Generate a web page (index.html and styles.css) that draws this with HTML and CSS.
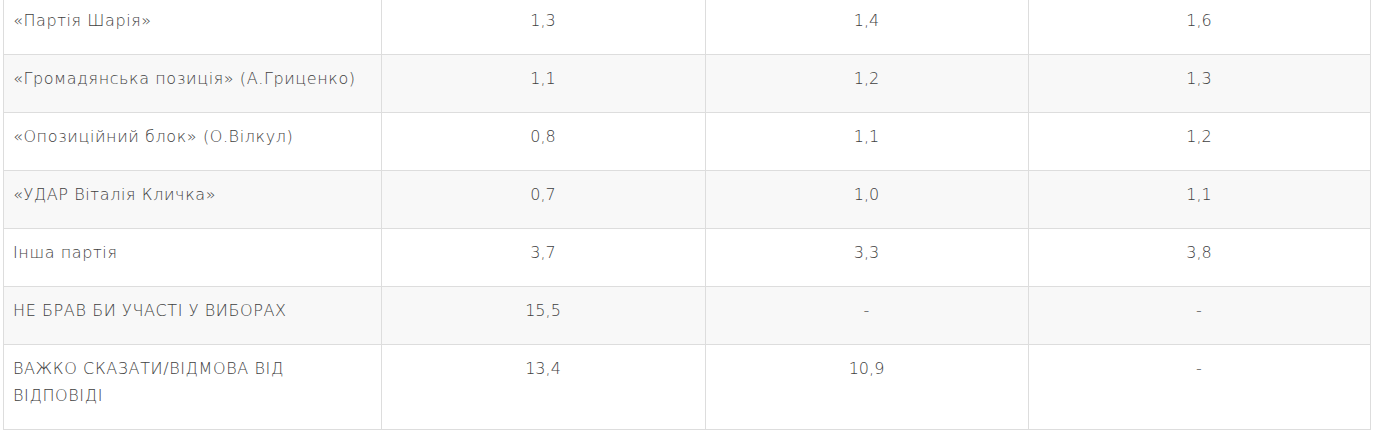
FILE: index.html
```html
<!DOCTYPE html>
<html lang="uk">
<head>
<meta charset="utf-8">
<link rel="stylesheet" href="styles.css">
</head>
<body>
<table class="poll">
  <colgroup>
    <col class="c1"><col class="c2"><col class="c3"><col class="c4">
  </colgroup>
  <tbody>
    <tr><td>«Партія Шарія»</td><td>1,3</td><td>1,4</td><td>1,6</td></tr>
    <tr><td>«Громадянська позиція» (А.Гриценко)</td><td>1,1</td><td>1,2</td><td>1,3</td></tr>
    <tr><td>«Опозиційний блок» (О.Вілкул)</td><td>0,8</td><td>1,1</td><td>1,2</td></tr>
    <tr><td>«УДАР Віталія Кличка»</td><td>0,7</td><td>1,0</td><td>1,1</td></tr>
    <tr><td>Інша партія</td><td>3,7</td><td>3,3</td><td>3,8</td></tr>
    <tr><td>НЕ БРАВ БИ УЧАСТІ У ВИБОРАХ</td><td>15,5</td><td>-</td><td>-</td></tr>
    <tr><td>ВАЖКО СКАЗАТИ/ВІДМОВА ВІД ВІДПОВІДІ</td><td>13,4</td><td>10,9</td><td>-</td></tr>
  </tbody>
</table>
</body>
</html>
```
FILE: styles.css
```css
html, body {
  margin: 0;
  padding: 0;
  background: #fff;
}
body {
  font-family: "DejaVu Sans", "Open Sans", sans-serif;
  font-weight: 200;
  font-size: 16px;
  letter-spacing: 0.6px;
  color: #3f3f3f;
}
.poll {
  border-collapse: collapse;
  table-layout: fixed;
  width: 1367px;
  margin: -4px 0 0 3px;
}
.c1 { width: 378px; }
.c2 { width: 324px; }
.c3 { width: 323px; }
.c4 { width: 342px; }
.poll td {
  border: 1px solid #dddddd;
  padding: 10px 10px 20px 9px;
  line-height: 27px;
  vertical-align: top;
  text-align: center;
  letter-spacing: 0;
}
.poll td:first-child {
  text-align: left;
  letter-spacing: 0.6px;
}
.poll tr:nth-child(even) td {
  background: #f8f8f8;
}
```
